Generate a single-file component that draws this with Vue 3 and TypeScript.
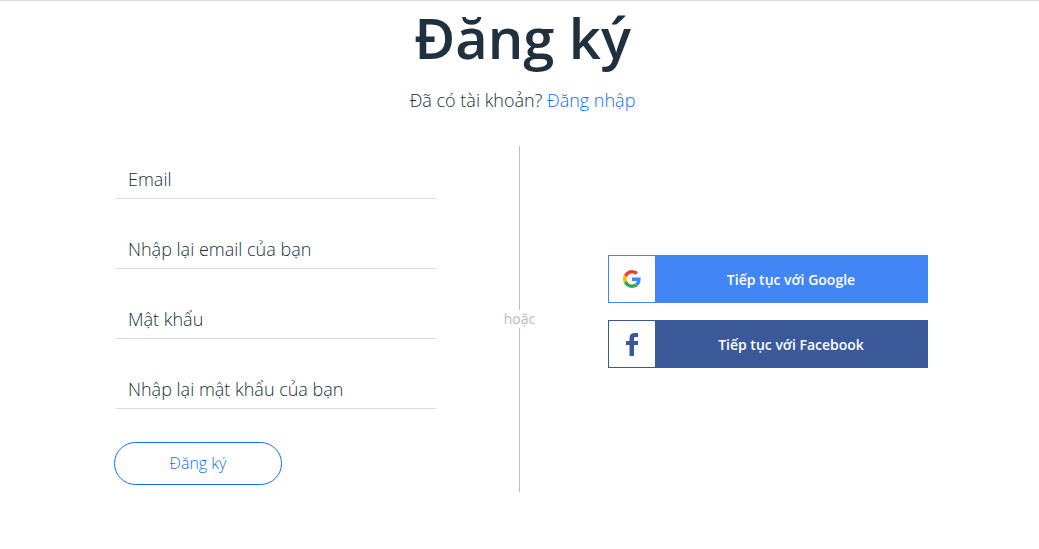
<script setup lang="ts">
import { reactive } from 'vue'

type FieldName = 'email' | 'emailRepeat' | 'password' | 'passwordRepeat'

interface Field {
  name: FieldName
  label: string
  type: 'email' | 'password'
}

const fields: Field[] = [
  { name: 'email', label: 'Email', type: 'email' },
  { name: 'emailRepeat', label: 'Nhập lại email của bạn', type: 'email' },
  { name: 'password', label: 'Mật khẩu', type: 'password' },
  { name: 'passwordRepeat', label: 'Nhập lại mật khẩu của bạn', type: 'password' },
]

const form = reactive<Record<FieldName, string>>({
  email: '',
  emailRepeat: '',
  password: '',
  passwordRepeat: '',
})
</script>

<template>
  <main class="page">
    <header class="heading">
      <h1 class="title">Đăng ký</h1>
      <p class="subtitle">Đã có tài khoản? <a class="link" href="#login">Đăng nhập</a></p>
    </header>

    <div class="columns">
      <form class="form" novalidate @submit.prevent>
        <div v-for="field in fields" :key="field.name" class="field">
          <input
            :id="field.name"
            v-model="form[field.name]"
            class="input"
            :type="field.type"
            :name="field.name"
            placeholder=" "
          />
          <label class="label" :for="field.name">{{ field.label }}</label>
        </div>
        <button class="submit" type="submit">Đăng ký</button>
      </form>

      <div class="divider"><span class="or">hoặc</span></div>

      <div class="social">
        <button class="provider google" type="button">
          <span class="logo">
            <svg width="18" height="18" viewBox="0 0 48 48" aria-hidden="true">
              <path fill="#EA4335" d="M24 9.5c3.54 0 6.71 1.22 9.21 3.6l6.85-6.85C35.9 2.38 30.47 0 24 0 14.62 0 6.51 5.38 2.56 13.22l7.98 6.19C12.43 13.72 17.74 9.5 24 9.5z" />
              <path fill="#4285F4" d="M46.98 24.55c0-1.57-.15-3.09-.38-4.55H24v9.02h12.94c-.58 2.96-2.26 5.48-4.78 7.18l7.73 6c4.51-4.18 7.09-10.36 7.09-17.65z" />
              <path fill="#FBBC05" d="M10.53 28.59A14.5 14.5 0 0 1 9.77 24c0-1.6.27-3.14.76-4.59l-7.98-6.19A23.9 23.9 0 0 0 0 24c0 3.88.92 7.54 2.56 10.78z" />
              <path fill="#34A853" d="M24 48c6.48 0 11.93-2.13 15.89-5.81l-7.73-6c-2.15 1.45-4.92 2.3-8.16 2.3-6.26 0-11.57-4.22-13.47-9.91l-7.98 6.19C6.51 42.62 14.62 48 24 48z" />
            </svg>
          </span>
          <span class="caption">Tiếp tục với Google</span>
        </button>
        <button class="provider facebook" type="button">
          <span class="logo">
            <svg width="12" height="23" viewBox="0 0 12 23" aria-hidden="true">
              <path fill="#3B5998" d="M3.5 23V12H0V8h3.5V5.200C3.500 1.900 5.300 0 8.600 0H12v3.900H9.700C8.300 3.900 8 4.500 8 5.700V8h4v4H8v11z" />
            </svg>
          </span>
          <span class="caption">Tiếp tục với Facebook</span>
        </button>
      </div>
    </div>
  </main>
</template>

<style>
body {
  margin: 0;
  background: #fff;
}
</style>

<style scoped>
.page {
  box-sizing: border-box;
  padding: 0 16px 56px 21px;
  border-top: 1px solid #dcdcdc;
  color: #20303c;
  font-family: "Open Sans", "Noto Sans", sans-serif;
}

.heading {
  padding-left: 1px;
  text-align: center;
}

.title {
  margin: 0;
  font-size: 56px;
  line-height: 72px;
  font-weight: 600;
}

.subtitle {
  margin: 15px 0 0;
  font-size: 18px;
  line-height: 24px;
  font-weight: 350;
}

.link {
  color: #116dff;
  text-decoration: none;
}

.columns {
  display: grid;
  grid-template-columns: minmax(0, 320px) minmax(48px, 172px) minmax(0, 320px);
  justify-content: center;
  margin-top: 34px;
}

.form {
  padding: 15px 0 7px;
}

.field {
  display: flex;
  position: relative;
  height: 38px;
  margin-bottom: 32px;
}

.input {
  box-sizing: border-box;
  width: 100%;
  margin: 0;
  padding: 0 12px;
  border: 0;
  border-bottom: 1px solid #dcdcdc;
  border-radius: 0;
  outline: 0;
  background: none;
  color: inherit;
  font: 350 18px/24px "Open Sans", "Noto Sans", sans-serif;
}

.input:focus {
  border-bottom-color: #116dff;
}

.label {
  position: absolute;
  left: 12px;
  top: 6px;
  font-size: 18px;
  line-height: 24px;
  font-weight: 350;
  pointer-events: none;
}

.input:focus + .label,
.input:not(:placeholder-shown) + .label {
  visibility: hidden;
}

.submit {
  width: 168px;
  height: 43px;
  margin: 1px 0 0 -2px;
  padding: 0 0 2px;
  border: 1px solid #116dff;
  border-radius: 22px;
  background: #fff;
  color: #116dff;
  font: 350 16px/24px "Open Sans", "Noto Sans", sans-serif;
  cursor: pointer;
}

.divider {
  display: flex;
  flex-direction: column;
  align-items: center;
  padding-right: 5px;
  color: #b6bbc0;
  font-size: 14px;
  line-height: 18px;
}

.divider::before,
.divider::after {
  content: "";
  flex: 1;
  width: 1px;
  background: #bfbfbf;
}

.social {
  display: flex;
  flex-direction: column;
  justify-content: center;
  gap: 17px;
  padding-bottom: 15px;
}

.provider {
  display: flex;
  height: 48px;
  margin: 0;
  padding: 0;
  border: 1px solid;
  color: #fff;
  font: 550 14px/20px "Open Sans", "Noto Sans", sans-serif;
  cursor: pointer;
}

.google {
  border-color: #4285f4;
  background: #4285f4;
}

.facebook {
  border-color: #3b5998;
  background: #3b5998;
}

.logo {
  display: flex;
  align-items: center;
  justify-content: center;
  flex: none;
  width: 46px;
  height: 46px;
  border-radius: 1px;
  background: #fff;
}

.caption {
  flex: 1;
  align-self: center;
  padding-top: 2px;
  text-align: center;
}
</style>
